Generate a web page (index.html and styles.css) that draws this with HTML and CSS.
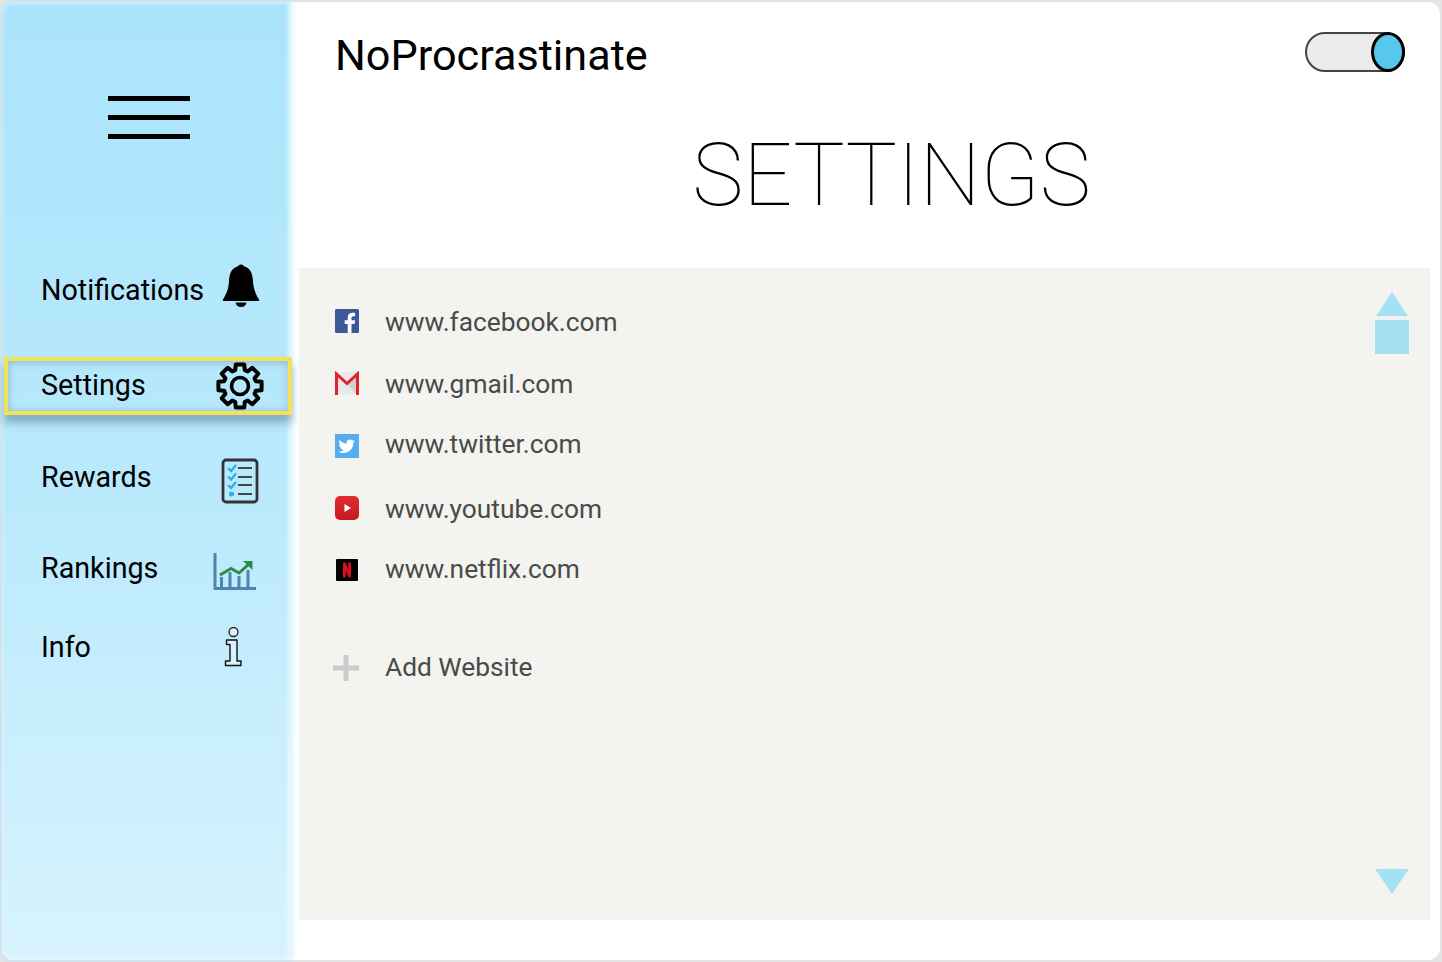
FILE: index.html
```html
<!DOCTYPE html>
<html>
<head>
  <meta charset="utf-8">
  <title>NoProcrastinate - Settings</title>
  <link rel="stylesheet" href="styles.css">
</head>
<body>
  <div class="frame">
    <aside class="sidebar">
      <div class="hamburger"><span></span><span></span><span></span></div>
      <nav class="nav">
        <a class="nav-item nav-notifications" href="#">
          <span>Notifications</span>
          <svg class="nav-icon bell" width="38" height="44" viewBox="0 0 38 44">
            <circle cx="19" cy="3.5" r="3"/>
            <path d="M19 2C10 2 7.5 9 7 17C6.6 24 5 29 1 35.5Q0 37 2 37H36Q38 37 37 35.5C33 29 31.4 24 31 17C30.5 9 28 2 19 2Z"/>
            <path d="M13.5 38.5H24.5C24 41.5 21.5 43 19 43C16.5 43 14 41.5 13.5 38.5Z"/>
          </svg>
        </a>
        <a class="nav-item nav-settings" href="#">
          <span>Settings</span>
          <svg class="nav-icon gear" width="48" height="48" viewBox="0 0 48 48">
            <path d="M19.18 8.22L19.8 2.4L28.2 2.4L28.82 8.22L31.75 9.43L36.3 5.76L42.24 11.7L38.57 16.25L39.78 19.18L45.6 19.8L45.6 28.2L39.78 28.82L38.57 31.75L42.24 36.3L36.3 42.24L31.75 38.57L28.82 39.78L28.2 45.6L19.8 45.6L19.18 39.78L16.25 38.57L11.7 42.24L5.76 36.3L9.43 31.75L8.22 28.82L2.4 28.2L2.4 19.8L8.22 19.18L9.43 16.25L5.76 11.7L11.7 5.76L16.25 9.43Z" fill="none" stroke="#000" stroke-width="4" stroke-linejoin="round"/>
            <circle cx="24" cy="24" r="8.5" fill="none" stroke="#000" stroke-width="3.6"/>
          </svg>
        </a>
        <a class="nav-item nav-rewards" href="#">
          <span>Rewards</span>
          <svg class="nav-icon list" width="38" height="46" viewBox="0 0 38 46">
            <rect x="2" y="2" width="34" height="42" rx="3" fill="none" stroke="#333" stroke-width="2.8"/>
            <path d="M7 10L10 13L15 7M7 18.5L10 21.5L15 15.5M7 27L10 30L15 24" fill="none" stroke="#29aef0" stroke-width="2.2"/>
            <circle cx="10.5" cy="36" r="2.5" fill="#29aef0"/>
            <path d="M17 10H31M17 19H31M17 27H31M17 36H31" stroke="#444" stroke-width="2.2"/>
          </svg>
        </a>
        <a class="nav-item nav-rankings" href="#">
          <span>Rankings</span>
          <svg class="nav-icon chart" width="44" height="38" viewBox="0 0 44 38">
            <path d="M2 0V35.5H43M8.5 24V35M17 19V35M26 23V35M35 17V35" fill="none" stroke="#4a86b0" stroke-width="3"/>
            <path d="M7 22L18 15.5L26 20L36 11" fill="none" stroke="#2e8b45" stroke-width="3"/>
            <path d="M30 8H39.500V17Z" fill="#2e8b45"/>
          </svg>
        </a>
        <a class="nav-item nav-info" href="#">
          <span>Info</span>
          <svg class="nav-icon info" width="20" height="40" viewBox="0 0 20 40">
            <circle cx="9.5" cy="5" r="4.5" fill="#fff" fill-opacity=".35" stroke="#222" stroke-width="1.3"/>
            <path d="M2.5 13H13V34H17V38.5H1.5V34H6V17.5H2.5Z" fill="#fff" fill-opacity=".35" stroke="#111" stroke-width="1.4" stroke-linejoin="round"/>
          </svg>
        </a>
      </nav>
    </aside>

    <main class="content">
      <header class="topbar">
        <h1 class="brand">NoProcrastinate</h1>
        <div class="toggle"><span class="toggle-knob"></span></div>
      </header>
      <h2 class="page-title">SETTINGS</h2>

      <section class="panel">
        <ul class="sites">
          <li class="site site-facebook">
            <svg width="24" height="24" viewBox="0 0 24 24">
              <rect width="24" height="24" rx="1.5" fill="#3b5998"/>
              <path d="M16.5 24V15H19.5L20 11.3H16.5V9C16.5 7.9 17 7.2 18.4 7.2H20.1V3.9C19.5 3.8 18.5 3.7 17.3 3.7C14.6 3.7 12.7 5.4 12.7 8.4V11.3H9.7V15H12.7V24Z" fill="#fff"/>
            </svg>
            <span>www.facebook.com</span>
          </li>
          <li class="site site-gmail">
            <svg width="24" height="24" viewBox="0 0 24 24">
              <rect y="1" width="24" height="22" fill="#eaeaea"/>
              <path d="M12 13L22 4V23H21Z" fill="#d2d2d2"/>
              <path d="M1.5 24V3L12 12.5L22.5 3V24" fill="none" stroke="#e0242c" stroke-width="3"/>
            </svg>
            <span>www.gmail.com</span>
          </li>
          <li class="site site-twitter">
            <svg width="24" height="24" viewBox="0 0 24 24">
              <rect width="24" height="24" fill="#55acee"/>
              <path d="M20 7.1C19.4 7.4 18.8 7.6 18.1 7.7C18.8 7.2 19.3 6.6 19.6 5.8C18.9 6.2 18.2 6.5 17.4 6.6C16.8 5.9 15.9 5.5 14.9 5.5C13 5.5 11.5 7 11.5 8.9C11.5 9.2 11.5 9.4 11.6 9.7C8.8 9.5 6.3 8.2 4.6 6.1C4.3 6.6 4.1 7.2 4.1 7.8C4.1 9 4.7 10 5.6 10.6C5 10.6 4.5 10.4 4 10.2C4 11.9 5.2 13.2 6.8 13.5C6.3 13.7 5.8 13.7 5.3 13.6C5.7 14.9 7 15.9 8.4 15.9C6.9 17.1 5.3 17.6 3.4 17.4C4.9 18.4 6.7 18.9 8.6 18.9C14.9 18.9 18.3 13.7 18.3 9.2V8.8C19 8.3 19.5 7.7 20 7.1Z" fill="#fff"/>
            </svg>
            <span>www.twitter.com</span>
          </li>
          <li class="site site-youtube">
            <svg width="24" height="24" viewBox="0 0 24 24">
              <defs>
                <linearGradient id="yt" x1="0" y1="0" x2="0" y2="1">
                  <stop offset="0" stop-color="#e22d32"/>
                  <stop offset="1" stop-color="#c4181f"/>
                </linearGradient>
              </defs>
              <rect width="24" height="24" rx="5" fill="url(#yt)"/>
              <path d="M9.5 8L16 12L9.5 16Z" fill="#fff"/>
            </svg>
            <span>www.youtube.com</span>
          </li>
          <li class="site site-netflix">
            <svg width="24" height="24" viewBox="0 0 24 24">
              <rect x="1" y="1" width="22" height="22" rx="1" fill="#000"/>
              <path d="M8 4.5H10.8L13.2 12V4.5H16V19.5L13.2 19L10.8 12.5V19.5H8Z" fill="#d8101c"/>
            </svg>
            <span>www.netflix.com</span>
          </li>
          <li class="site site-add">
            <svg class="plus" width="26" height="26" viewBox="0 0 26 26">
              <path d="M13 0V26M0 13H26" stroke="#cbcbcb" stroke-width="5"/>
            </svg>
            <span>Add Website</span>
          </li>
        </ul>
        <div class="scroller">
          <div class="scroll-up">
            <span class="arrow-up"></span>
            <span class="scroll-thumb"></span>
          </div>
          <span class="arrow-down"></span>
        </div>
      </section>
    </main>
  </div>
</body>
</html>
```

FILE: styles.css
```css
* {
  box-sizing: border-box;
}

body {
  margin: 0;
  background-color: #e4e4e4;
  font-family: Roboto, sans-serif;
}

.frame {
  display: flex;
  width: 1438px;
  height: 958px;
  margin: 2px;
  background-color: #fff;
  border-radius: 12px;
}

/* Sidebar */
.sidebar {
  flex: 0 0 288px;
  min-width: 0;
  padding-top: 94px;
  background: linear-gradient(#aae4fc, #b9e9fc 50%, #d7f3fe);
  box-shadow: 0 0 7px 1px rgba(170, 228, 252, 0.7), inset -2px 0 4px rgba(255, 255, 255, 0.5), inset 0 0 4px 1px rgba(255, 255, 255, 0.3);
  border-radius: 12px 0 0 12px;
}

.hamburger {
  display: flex;
  flex-direction: column;
  gap: 14px;
  width: 82px;
  margin-left: 106px;
}

.hamburger span {
  height: 5px;
  background-color: #000;
}

.nav {
  margin-top: 120px;
}

.nav-item {
  display: flex;
  justify-content: space-between;
  align-items: center;
  height: 58px;
  padding-left: 39px;
  color: #000;
  font-size: 28.7px;
  text-decoration: none;
}

.nav-notifications {
  padding-right: 30px;
}

.nav-notifications span {
  margin-top: 4px;
}

.nav-settings {
  width: 288px;
  margin: 40px 0 37px 2px;
  padding-left: 33px;
  padding-right: 24px;
  border: 4px solid #f1e25a;
  box-shadow: 0 8px 8px rgba(60, 90, 110, 0.4), inset 0 1px 8px rgba(60, 90, 110, 0.35);
}

.nav-settings span {
  margin-bottom: 2px;
}

.nav-rewards {
  padding-right: 31px;
  margin-bottom: 33px;
}

.nav-rewards span {
  margin-bottom: 8px;
}

.nav-rankings {
  padding-right: 33px;
  margin-bottom: 17px;
}

.nav-rankings span {
  margin-bottom: 8px;
}

.nav-info {
  padding-right: 46px;
}

.bell {
  margin-bottom: 4px;
}

/* Main column */
.content {
  flex: 1;
  padding-left: 9px;
  display: flex;
  flex-direction: column;
}

.topbar {
  display: flex;
  justify-content: space-between;
  padding: 30px 35px 0 36px;
  height: 108px;
}

.brand {
  margin: 0;
  font-size: 43.2px;
  font-weight: 400;
  line-height: 47px;
  color: #000;
}

.toggle {
  display: flex;
  justify-content: flex-end;
  width: 100px;
  height: 40px;
  background-color: #ebebeb;
  border: 2px solid #444;
  border-radius: 20px;
}

.toggle-knob {
  width: 34px;
  margin: -2px;
  background-color: #57c8ec;
  border: 3px solid #000;
  border-radius: 50%;
}

.page-title {
  margin: 0;
  height: 158px;
  padding-left: 44px;
  font-size: 86.3px;
  font-weight: 100;
  line-height: 132px;
  text-align: center;
  color: #000;
}

.panel {
  display: flex;
  justify-content: space-between;
  width: 1131px;
  height: 652px;
  background-color: #f3f3ef;
}

/* Website list */
.sites {
  list-style: none;
  margin: 0;
  padding: 0 0 0 36px;
}

.site {
  display: flex;
  align-items: center;
  gap: 26px;
  height: 40px;
  color: #4a4a4a;
  font-size: 26.3px;
}

.site-facebook {
  margin-top: 34px;
}

.site-facebook svg,
.site-gmail svg,
.site-youtube svg {
  margin-bottom: 2px;
}

.site-gmail {
  margin-top: 22px;
}

.site-twitter {
  margin-top: 20px;
}

.site-twitter svg {
  margin-top: 4px;
}

.site-youtube {
  margin-top: 25px;
}

.site-netflix {
  margin-top: 20px;
}

.site-netflix svg {
  margin-top: 2px;
}

.site-add {
  margin-top: 58px;
}

.plus {
  margin: 2px 0 0 -2px;
}

/* Scroll controls */
.scroller {
  display: flex;
  flex-direction: column;
  justify-content: space-between;
  align-items: center;
  width: 34px;
  margin-right: 21px;
  padding: 24px 0 26px;
}

.scroll-up {
  display: flex;
  flex-direction: column;
  align-items: center;
  gap: 4px;
}

.arrow-up {
  width: 0;
  height: 0;
  border-left: 16px solid transparent;
  border-right: 16px solid transparent;
  border-bottom: 24px solid #a6e1f3;
}

.scroll-thumb {
  width: 34px;
  height: 34px;
  background-color: #a6e1f3;
}

.arrow-down {
  width: 0;
  height: 0;
  border-left: 17px solid transparent;
  border-right: 17px solid transparent;
  border-top: 25px solid #a6e1f3;
}
```
